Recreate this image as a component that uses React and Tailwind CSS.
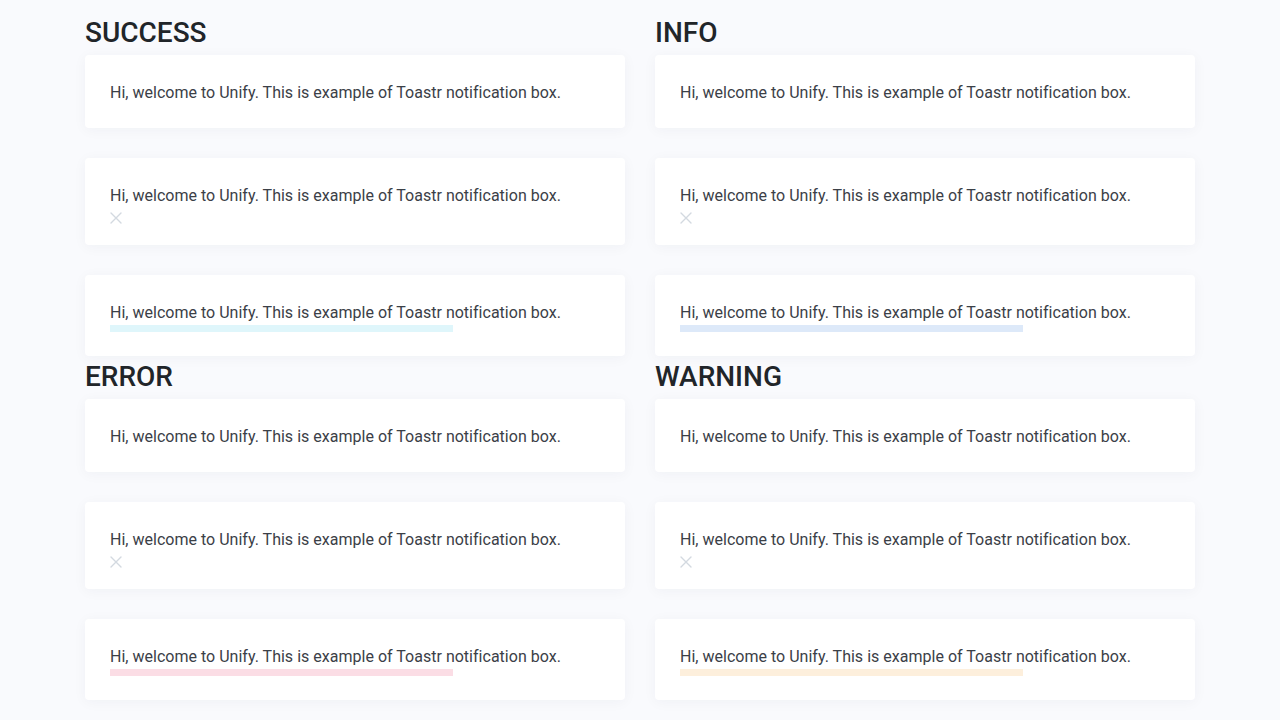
const MESSAGE = "Hi, welcome to Unify. This is example of Toastr notification box.";

const sections = [
  { title: "SUCCESS", bar: "bg-[#dff6fb]" },
  { title: "INFO", bar: "bg-[#dde9f9]" },
  { title: "ERROR", bar: "bg-[#fbdde5]" },
  { title: "WARNING", bar: "bg-[#fdefdc]" },
];

const CloseIcon = () => (
  <svg width="12" height="12" viewBox="0 0 12 12" className="block">
    <path d="M1 1 L11 11 M11 1 L1 11" stroke="#d3d9e0" strokeWidth="1.4" strokeLinecap="round" />
  </svg>
);

const ToastCard = ({ children }) => (
  <div className={`rounded-[4px] bg-white px-[25px] pt-[26px] shadow-[0_2px_14px_rgba(30,40,70,0.045)] ${children ? "pb-[24px]" : "pb-[23px]"}`}>
    <p className="text-[16px] leading-[24px] tracking-[0.015px] text-[#3b4047]">{MESSAGE}</p>
    {children}
  </div>
);

const Section = ({ title, bar }) => (
  <section className="mb-[3.5px]">
    <h4 className="mb-[6px] text-[28px] font-medium leading-[1.2] text-[#212529]">{title}</h4>
    <div className="flex flex-col gap-[30px]">
      <ToastCard />
      <ToastCard>
        <div className="h-[13px] pt-[4px]">
          <CloseIcon />
        </div>
      </ToastCard>
      <ToastCard>
        <div className={`h-[7px] w-[70%] ${bar}`} />
      </ToastCard>
    </div>
  </section>
);

export default function App() {
  return (
    <div className="min-h-screen bg-[#f9fafd] font-['Roboto','Liberation_Sans',sans-serif]">
      <div className="mx-auto w-[1110px] pt-[15.5px]">
        <div className="grid grid-cols-2 gap-x-[30px]">
          {sections.map((s) => (
            <Section key={s.title} title={s.title} bar={s.bar} />
          ))}
        </div>
      </div>
    </div>
  );
}
